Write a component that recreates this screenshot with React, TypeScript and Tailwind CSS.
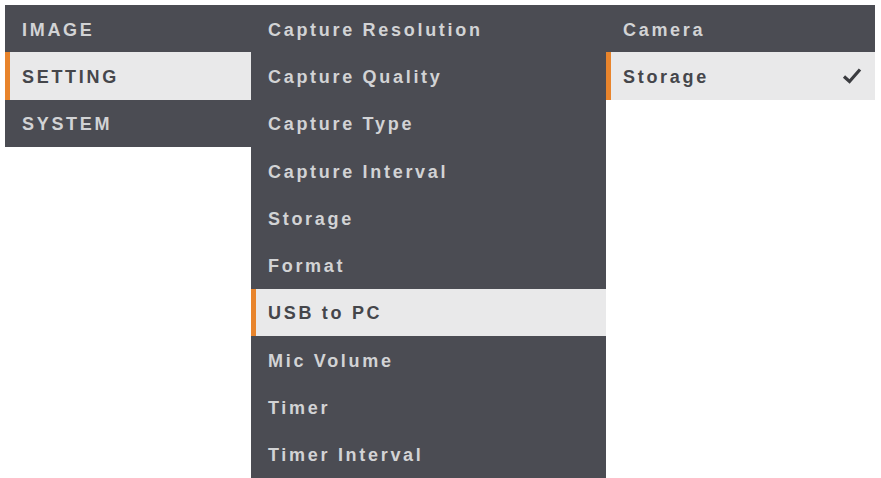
import React from 'react';

const categories = ['IMAGE', 'SETTING', 'SYSTEM'];

const settings = [
  'Capture Resolution',
  'Capture Quality',
  'Capture Type',
  'Capture Interval',
  'Storage',
  'Format',
  'USB to PC',
  'Mic Volume',
  'Timer',
  'Timer Interval',
];

const options = ['Camera', 'Storage'];

function Row({ label, active, check }: { label: string; active?: boolean; check?: boolean }) {
  return (
    <div
      className={
        'relative flex items-center h-[47.3px] pl-[17px] pr-3 pt-[3px] text-[18px] font-bold tracking-[2.7px] ' +
        (active ? 'bg-[#e9e9ea] text-[#45464b]' : 'text-[#d2d3d5]')
      }
    >
      {active && <div className="absolute left-0 top-0 bottom-0 w-[5px] bg-[#e8842c]" />}
      <span className="flex-1 whitespace-nowrap">{label}</span>
      {check && (
        <svg width="20" height="18" viewBox="0 0 20 18" className="mr-[1px] -mt-[3px]">
          <path d="M2 9.5 L7.5 14.5 L18 2.5" fill="none" stroke="#3b3c40" strokeWidth="3.2" />
        </svg>
      )}
    </div>
  );
}

export default function App() {
  return (
    <div
      className="w-[881px] h-[478px] bg-white pt-[5px] pl-[5px] flex overflow-hidden"
      style={{ fontFamily: '"Liberation Sans", Arial, sans-serif' }}
    >
      {/* Category column */}
      <div className="w-[246px] self-start bg-[#4b4c53]">
        {categories.map((c) => (
          <Row key={c} label={c} active={c === 'SETTING'} />
        ))}
      </div>

      {/* Settings column */}
      <div className="w-[355px] bg-[#4b4c53]">
        {settings.map((s) => (
          <Row key={s} label={s} active={s === 'USB to PC'} />
        ))}
      </div>

      {/* Options column */}
      <div className="w-[269px] self-start bg-[#4b4c53]">
        {options.map((o) => (
          <Row key={o} label={o} active={o === 'Storage'} check={o === 'Storage'} />
        ))}
      </div>
    </div>
  );
}
